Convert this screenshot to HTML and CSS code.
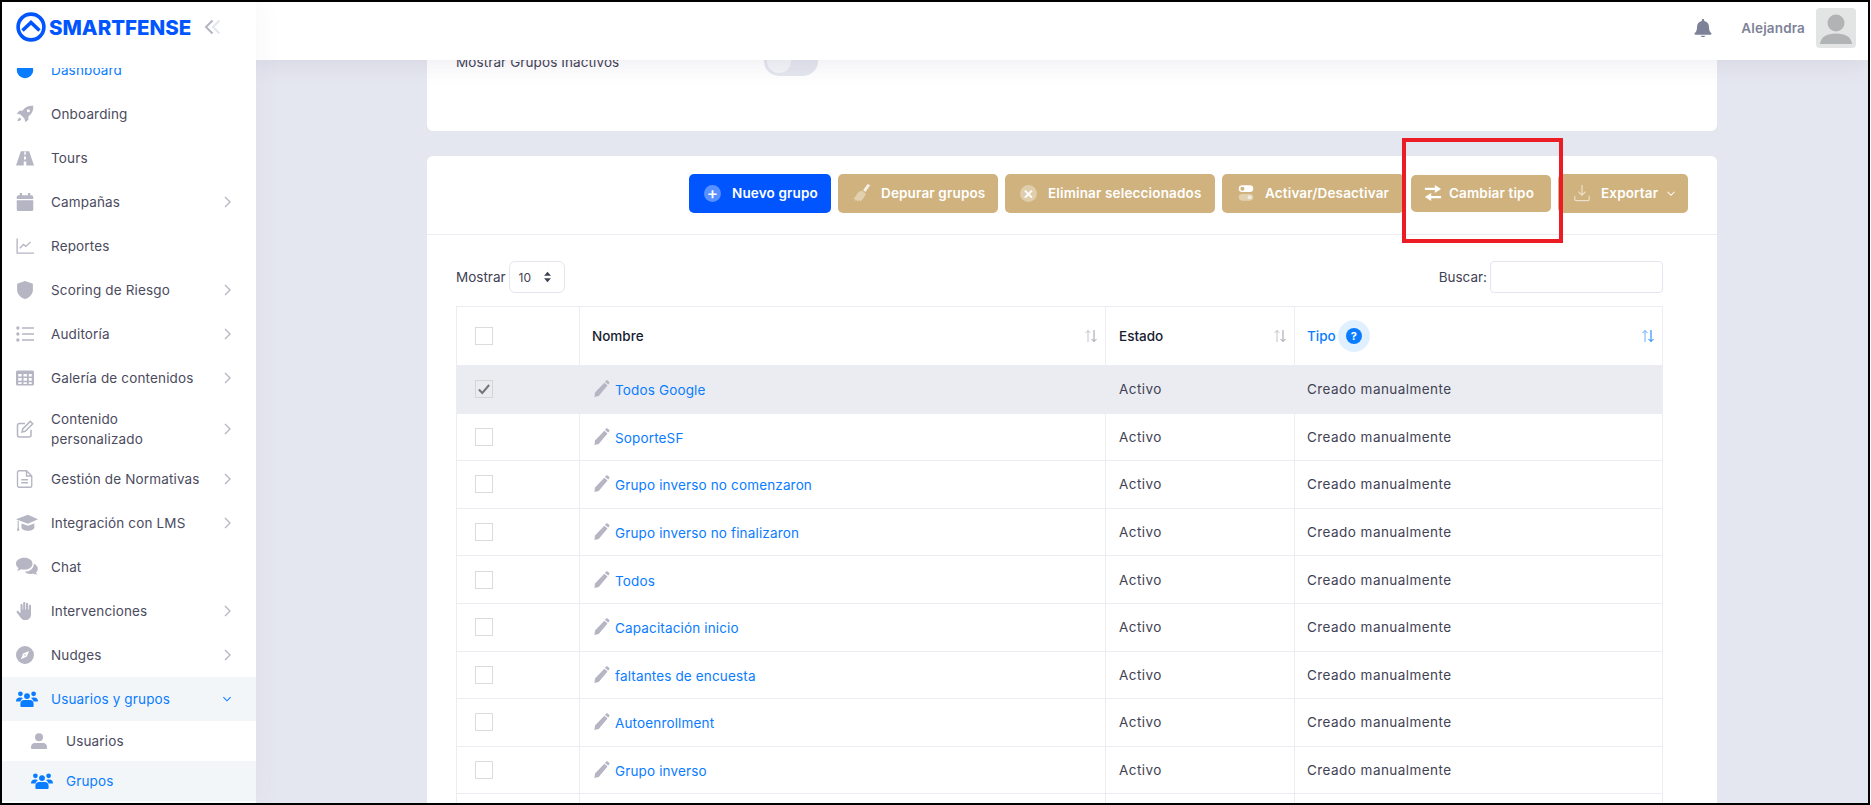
FILE: index.html
```html
<!DOCTYPE html>
<html lang="es">
<head>
  <meta charset="UTF-8" />
  <meta name="viewport" content="width=device-width, initial-scale=1.0"/>
  <title>Grupos</title>
  <link rel="stylesheet" href="styles.css">
</head>
<body>

  <!-- Icons -->
  <svg class="icon-defs" xmlns="http://www.w3.org/2000/svg">
    <symbol id="i-gauge" viewBox="0 0 24 24"><circle cx="12" cy="12" r="11"/></symbol>
    <symbol id="i-rocket" viewBox="0 0 24 24"><path fill-rule="evenodd" d="M23 1c-6-.6-11 1.500-14.500 6.500H4.500L1 11.500l5 1.300 5.200 5.200L12.500 23l4-3.500v-4.200C21.500 11.800 23.500 7 23 1zM16.500 5.500a2 2 0 1 0 0 4 2 2 0 0 0 0-4z"/><path d="M5 16.500c-1.500.5-2.500 2-3 5 3-.5 4.500-1.500 5-3z"/></symbol>
    <symbol id="i-road" viewBox="0 0 24 24"><path fill-rule="evenodd" d="M6.500 3h11L24 22H0zM11 3.500v4h2v-4zM10.700 10v4h2.600v-4zM10.300 16.500V22h3.400v-5.500z"/></symbol>
    <symbol id="i-calendar" viewBox="0 0 24 24"><path d="M5 0h3v3h8V0h3v3h2a2 2 0 0 1 2 2v3H1V5a2 2 0 0 1 2-2h2zM1 9.500h22V22a2 2 0 0 1-2 2H3a2 2 0 0 1-2-2z"/></symbol>
    <symbol id="i-chart" viewBox="0 0 24 24"><path class="line" stroke-width="1.800" d="M1.500 2v19.500H24M5 15l5-5 3 2.500 6.500-6"/></symbol>
    <symbol id="i-shield" viewBox="0 0 24 24"><path d="M12 0l10.500 3.500v8c0 6-4.500 10.500-10.500 12.500C6 22 1.500 17.500 1.500 11.500v-8z"/></symbol>
    <symbol id="i-list" viewBox="0 0 24 24"><path class="line" stroke-width="2.200" d="M8 4h16M8 12h16M8 20h16"/><circle cx="2.500" cy="4" r="2.200"/><circle cx="2.500" cy="12" r="2.200"/><circle cx="2.500" cy="20" r="2.200"/></symbol>
    <symbol id="i-grid" viewBox="0 0 24 24"><path fill-rule="evenodd" d="M2 2h20a2 2 0 0 1 2 2v16a2 2 0 0 1-2 2H2a2 2 0 0 1-2-2V4a2 2 0 0 1 2-2zM3 6.500v3.500h4.500V6.500zM10 6.500v3.500h4.500V6.500zM17 6.500v3.500h4V6.500zM3 12v3.500h4.500V12zM10 12v3.500h4.500V12zM17 12v3.500h4V12zM3 17.500V20h4.500v-2.500zM10 17.500V20h4.500v-2.500zM17 17.500V20h4v-2.500z"/></symbol>
    <symbol id="i-edit" viewBox="0 0 24 24"><path class="line" stroke-width="2" d="M20 13v7a2.500 2.500 0 0 1-2.500 2.500h-13A2.500 2.500 0 0 1 2 20V7a2.500 2.500 0 0 1 2.500-2.500H12M19 1.800l3.300 3.300-10 10-4.300 1 1-4.300z"/></symbol>
    <symbol id="i-file" viewBox="0 0 24 24"><path class="line" stroke-width="1.800" d="M4 1h10l7 7v13a2 2 0 0 1-2 2H4a2 2 0 0 1-2-2V3a2 2 0 0 1 2-2zM14 1v7h7M7 13h9M7 17h9"/></symbol>
    <symbol id="i-cap" viewBox="0 0 24 24"><path d="M13 3L0 8l13 4.800L24 8zM6 12.500v4.500c0 2 3 3.500 7 3.500s7-1.500 7-3.500v-4.500l-7 2.600zM1.800 9.500h1.200v7l.7 4H1l.8-4z"/></symbol>
    <symbol id="i-chat" viewBox="0 0 24 24"><path d="M9 2c5 0 9 2.800 9 6.500S14 15 9 15c-1.200 0-2.300-.2-3.300-.5C4.500 15.500 3 16 1 16c1-1 1.500-2 1.700-3C1 11.800 0 10.200 0 8.500 0 4.800 4 2 9 2z"/><path d="M19.500 8.500c2.500 1 4.300 3 4.300 5.300 0 1.600-.8 3-2 4 .2 1 .8 2 1.700 2.700-2 0-3.500-.4-4.700-1.300-1 .3-2 .5-3 .5-2.600 0-4.800-1-6.300-2.500 5.500 0 10-3.500 10-8.700z"/></symbol>
    <symbol id="i-hand" viewBox="0 0 24 24"><path d="M11 0c.8 0 1.400.6 1.400 1.400V10h1V2.500c0-.8.700-1.400 1.400-1.400s1.400.6 1.400 1.400V10h1V5c0-.8.700-1.400 1.400-1.400S20 4.200 20 5v11.500c0 4.300-3.300 7.500-7.500 7.500-3 0-5-1.300-6.500-3.500L1 14c-.5-.7-.3-1.500.3-2s1.500-.3 2 .3L6 15V4c0-.8.600-1.400 1.400-1.400S8.800 3.200 8.800 4v6h.8V1.400C9.600.6 10.200 0 11 0z"/></symbol>
    <symbol id="i-compass" viewBox="0 0 24 24"><path fill-rule="evenodd" d="M12 0a12 12 0 1 1 0 24 12 12 0 0 1 0-24zM17.500 6.500L9.500 10l-3 7.500 8-3.500zM12 11a1 1 0 1 1 0 2 1 1 0 0 1 0-2z"/></symbol>
    <symbol id="i-users" viewBox="0 0 30 24"><circle cx="6" cy="5" r="3.200"/><circle cx="24" cy="5" r="3.200"/><circle cx="15" cy="8" r="4"/><path d="M0 15c0-3 2-5 5-5h2c1 0 2 .4 2.500 1-1.800 1-3 2.500-3.300 4.500H1c-.6 0-1-.2-1-.5zM30 15c0-3-2-5-5-5h-2c-1 0-2 .4-2.500 1 1.800 1 3 2.500 3.300 4.500H29c.6 0 1-.2 1-.5zM11 13.500h8c3 0 5 2.200 5 5v3c0 .8-.7 1.500-1.500 1.500h-15C6.700 23 6 22.300 6 21.500v-3c0-2.800 2-5 5-5z"/></symbol>
    <symbol id="i-user" viewBox="0 0 24 24"><circle cx="12" cy="6.500" r="6"/><path d="M6 15h12c3.500 0 6 2.500 6 6v1.500c0 .8-.7 1.500-1.500 1.500h-21C.7 24 0 23.300 0 22.500V21c0-3.500 2.500-6 6-6z"/></symbol>
    <symbol id="i-pencil" viewBox="0 0 24 24"><path d="M18.500.8c.5-.6 1.400-.7 2-.2l2.300 2c.6.500.7 1.400.2 2L21.500 6.500 17 2.700zM16 4l4.500 3.800L8 22.500 2 24l.8-6.300z"/></symbol>
    <symbol id="i-bell" viewBox="0 0 24 24"><path d="M12 0c1 0 1.600.7 1.600 1.600v1C17.500 3.400 20 6.500 20 10.500c0 5 1.400 6.600 3 8.300.8.900.2 2.200-1 2.200H2c-1.200 0-1.800-1.300-1-2.200 1.600-1.700 3-3.300 3-8.300 0-4 2.500-7.100 6.400-7.900v-1C10.400.7 11 0 12 0zM9 22.200h6c0 1-1.300 1.800-3 1.800s-3-.8-3-1.800z"/></symbol>
    <symbol id="i-avatar" viewBox="0 0 40 40"><circle cx="20" cy="15" r="8.500"/><path d="M4 36c1-7 6-10.500 16-10.500S35 29 36 36z"/></symbol>
    <symbol id="i-chev-right" viewBox="0 0 10 14"><path class="line" stroke-width="1.300" d="M3 2l5 5-5 5"/></symbol>
    <symbol id="i-chev-down" viewBox="0 0 14 10"><path class="line" stroke-width="1.500" d="M2 2.500l5 5 5-5"/></symbol>
    <symbol id="i-sort" viewBox="0 0 14 14"><path class="line sort-up" d="M4 13V1.500M1.500 4L4 1.500 6.500 4"/><path class="line" d="M10 1v11.500M7.500 10l2.500 2.500 2.500-2.500"/></symbol>
    <symbol id="i-broom" viewBox="0 0 24 24"><path d="M23 1.500L19.500 0l-6 8 3 2.500z" fill-opacity=".8"/><path fill-opacity=".4" d="M12 8.500l5 4c-.5 3.500-4 7.500-7.500 11L8 21l-2.500 2.500L4.500 21 2 22.500l1-3-3 .5c3-3 5-5 6-8 2-1.500 4-3 6-3z"/></symbol>
  </svg>

  <div class="frame">

    <!-- Sidebar -->
    <aside class="sidebar">
      <div class="brand">
        <svg class="logo" viewBox="0 0 30 30"><circle cx="15" cy="15" r="12.900"/><path d="M6.500 18.500L15 10.500l8.500 8"/></svg>
        <span class="brand-name">SMARTFENSE</span>
        <svg class="collapse" viewBox="0 0 18 16"><path class="dark" d="M8.500 1.500L2 8l6.500 6.500"/><path class="pale" d="M15.500 1.500L9 8l6.500 6.500"/></svg>
      </div>
      <nav class="menu">
        <a class="menu-item is-link"><svg class="menu-icon"><use href="#i-gauge"/></svg><span>Dashboard</span></a>
        <a class="menu-item"><svg class="menu-icon"><use href="#i-rocket"/></svg><span>Onboarding</span></a>
        <a class="menu-item"><svg class="menu-icon"><use href="#i-road"/></svg><span>Tours</span></a>
        <a class="menu-item"><svg class="menu-icon"><use href="#i-calendar"/></svg><span>Campañas</span><svg class="chev"><use href="#i-chev-right"/></svg></a>
        <a class="menu-item"><svg class="menu-icon"><use href="#i-chart"/></svg><span>Reportes</span></a>
        <a class="menu-item"><svg class="menu-icon"><use href="#i-shield"/></svg><span>Scoring de Riesgo</span><svg class="chev"><use href="#i-chev-right"/></svg></a>
        <a class="menu-item"><svg class="menu-icon"><use href="#i-list"/></svg><span>Auditoría</span><svg class="chev"><use href="#i-chev-right"/></svg></a>
        <a class="menu-item"><svg class="menu-icon"><use href="#i-grid"/></svg><span>Galería de contenidos</span><svg class="chev"><use href="#i-chev-right"/></svg></a>
        <a class="menu-item tall"><svg class="menu-icon"><use href="#i-edit"/></svg><span>Contenido<br>personalizado</span><svg class="chev"><use href="#i-chev-right"/></svg></a>
        <a class="menu-item"><svg class="menu-icon"><use href="#i-file"/></svg><span>Gestión de Normativas</span><svg class="chev"><use href="#i-chev-right"/></svg></a>
        <a class="menu-item"><svg class="menu-icon big"><use href="#i-cap"/></svg><span>Integración con LMS</span><svg class="chev"><use href="#i-chev-right"/></svg></a>
        <a class="menu-item"><svg class="menu-icon big"><use href="#i-chat"/></svg><span>Chat</span></a>
        <a class="menu-item"><svg class="menu-icon"><use href="#i-hand"/></svg><span>Intervenciones</span><svg class="chev"><use href="#i-chev-right"/></svg></a>
        <a class="menu-item"><svg class="menu-icon"><use href="#i-compass"/></svg><span>Nudges</span><svg class="chev"><use href="#i-chev-right"/></svg></a>
        <a class="menu-item is-link is-open"><svg class="menu-icon big"><use href="#i-users"/></svg><span>Usuarios y grupos</span><svg class="chev"><use href="#i-chev-down"/></svg></a>
        <a class="menu-item sub"><svg class="menu-icon small"><use href="#i-user"/></svg><span>Usuarios</span></a>
        <a class="menu-item sub is-link is-open"><svg class="menu-icon big"><use href="#i-users"/></svg><span>Grupos</span></a>
      </nav>
    </aside>

    <div class="main">

      <!-- Header -->
      <header class="topbar">
        <svg class="bell"><use href="#i-bell"/></svg>
        <span class="username">Alejandra</span>
        <div class="avatar"><svg><use href="#i-avatar"/></svg></div>
      </header>

      <main class="content">

        <section class="card filter-card">
          <div class="filter-row">
            <span class="filter-label">Mostrar Grupos Inactivos</span>
            <span class="toggle"></span>
          </div>
        </section>

        <section class="card">
          <div class="toolbar">
            <button class="btn btn-primary w-new"><span class="btn-round">+</span>Nuevo grupo</button>
            <button class="btn w-clean"><svg class="btn-icon"><use href="#i-broom"/></svg>Depurar grupos</button>
            <button class="btn w-delete"><span class="btn-round">×</span>Eliminar seleccionados</button>
            <button class="btn w-activate">
              <svg class="btn-icon" viewBox="0 0 20 20"><rect x="2" y="1.500" width="16" height="7.500" rx="3.700" fill="#fff"/><circle cx="6" cy="5.200" r="2.200" fill="#cfb27e"/><rect x="2" y="11" width="16" height="7.500" rx="3.700" fill="#fff" fill-opacity=".4"/><circle cx="14" cy="14.700" r="2.200" fill="#fff" fill-opacity=".6"/></svg>
              Activar/Desactivar
            </button>
            <button class="btn w-change">
              <svg class="btn-icon" viewBox="0 0 20 20"><path d="M1 4.200h11V1l7 4.500-7 4.500V6.800H1zM19 13.200H8V10l-7 4.500L8 19v-3.200h11z"/></svg>
              Cambiar tipo
            </button>
            <button class="btn w-export">
              <svg class="btn-icon faint" viewBox="0 0 20 20"><path d="M10 1v11M6 8.500l4 4 4-4M2 13v4a1.500 1.500 0 0 0 1.500 1.500h13A1.500 1.500 0 0 0 18 17v-4"/></svg>
              Exportar
              <svg class="btn-chev"><use href="#i-chev-down"/></svg>
            </button>
          </div>

          <div class="table-area">
            <div class="table-controls">
              <label class="length">Mostrar
                <span class="select">10
                  <svg viewBox="0 0 10 14"><path d="M5 1l4 4.500H1zM5 13L1 8.500h8z"/></svg>
                </span>
              </label>
              <label class="search">Buscar:
                <input type="text">
              </label>
            </div>

            <table class="groups">
              <colgroup>
                <col class="col-check"><col class="col-name"><col class="col-state"><col class="col-type">
              </colgroup>
              <thead>
                <tr>
                  <th><span class="check"></span></th>
                  <th><div class="th-inner">Nombre<svg class="sort"><use href="#i-sort"/></svg></div></th>
                  <th><div class="th-inner">Estado<svg class="sort"><use href="#i-sort"/></svg></div></th>
                  <th class="is-sorted"><div class="th-inner"><span class="th-type">Tipo <span class="help"><b>?</b></span></span><svg class="sort"><use href="#i-sort"/></svg></div></th>
                </tr>
              </thead>
              <tbody>
                <tr class="selected">
                  <td><span class="check"><svg viewBox="0 0 14 14"><path d="M2.500 7.500l3 3 6-7"/></svg></span></td>
                  <td><svg class="pencil"><use href="#i-pencil"/></svg><a>Todos Google</a></td>
                  <td>Activo</td><td>Creado manualmente</td>
                </tr>
                <tr>
                  <td><span class="check"></span></td>
                  <td><svg class="pencil"><use href="#i-pencil"/></svg><a>SoporteSF</a></td>
                  <td>Activo</td><td>Creado manualmente</td>
                </tr>
                <tr>
                  <td><span class="check"></span></td>
                  <td><svg class="pencil"><use href="#i-pencil"/></svg><a>Grupo inverso no comenzaron</a></td>
                  <td>Activo</td><td>Creado manualmente</td>
                </tr>
                <tr>
                  <td><span class="check"></span></td>
                  <td><svg class="pencil"><use href="#i-pencil"/></svg><a>Grupo inverso no finalizaron</a></td>
                  <td>Activo</td><td>Creado manualmente</td>
                </tr>
                <tr>
                  <td><span class="check"></span></td>
                  <td><svg class="pencil"><use href="#i-pencil"/></svg><a>Todos</a></td>
                  <td>Activo</td><td>Creado manualmente</td>
                </tr>
                <tr>
                  <td><span class="check"></span></td>
                  <td><svg class="pencil"><use href="#i-pencil"/></svg><a>Capacitación inicio</a></td>
                  <td>Activo</td><td>Creado manualmente</td>
                </tr>
                <tr>
                  <td><span class="check"></span></td>
                  <td><svg class="pencil"><use href="#i-pencil"/></svg><a>faltantes de encuesta</a></td>
                  <td>Activo</td><td>Creado manualmente</td>
                </tr>
                <tr>
                  <td><span class="check"></span></td>
                  <td><svg class="pencil"><use href="#i-pencil"/></svg><a>Autoenrollment</a></td>
                  <td>Activo</td><td>Creado manualmente</td>
                </tr>
                <tr>
                  <td><span class="check"></span></td>
                  <td><svg class="pencil"><use href="#i-pencil"/></svg><a>Grupo inverso</a></td>
                  <td>Activo</td><td>Creado manualmente</td>
                </tr>
                <tr>
                  <td></td><td></td><td></td><td></td>
                </tr>
              </tbody>
            </table>
          </div>
        </section>
      </main>
    </div>

    <!-- Red highlight painted on the screenshot -->
    <div class="highlight"></div>
  </div>

</body>
</html>
```

FILE: styles.css
```css
* { box-sizing: border-box; margin: 0; padding: 0; }

html, body { height: 100%; overflow: hidden; }

body {
  font-family: "Inter", "Noto Sans", sans-serif;
  font-size: 13.5px;
  color: #3f4254;
  background: #fff;
}

.icon-defs { display: none; }
.line { fill: none; stroke: currentColor; }

.frame {
  position: relative;
  display: flex;
  width: 1870px;
  height: 805px;
  border: 2px solid #000;
  overflow: hidden;
}

/* Sidebar */
.sidebar {
  position: relative;
  z-index: 3;
  flex: 0 0 254px;
  display: flex;
  flex-direction: column;
  background: #fff;
  box-shadow: 0 0 28px rgba(82, 63, 105, 0.05);
}

.brand {
  flex: 0 0 66px;
  display: flex;
  align-items: center;
  padding: 0 0 16px 14px;
  background: #fff;
  position: relative;
  z-index: 1;
}

.logo { width: 30px; height: 30px; fill: none; stroke: #0055ff; stroke-width: 3.6; }

.brand-name {
  margin-left: 3px;
  font-size: 20.5px;
  font-weight: 800;
  color: #0055ff;
}

.collapse { width: 18px; height: 16px; margin-left: 13px; fill: none; stroke-width: 2; }
.collapse .dark { stroke: #b5b5c3; }
.collapse .pale { stroke: #e4e6ef; }

.menu { flex: 1; margin-top: -20px; color: #4b4b5e; }

.menu-item {
  display: flex;
  align-items: center;
  height: 44px;
  padding: 0 24px 0 14px;
  font-size: 13.5px;
  line-height: 20px;
  letter-spacing: 0.15px;
}

.menu-item.tall { height: 57px; }

.menu-item span { flex: 1; }

.menu-icon {
  flex: 0 0 18px;
  width: 18px;
  height: 18px;
  margin-right: 17px;
  fill: #b5b5c3;
  color: #b5b5c3;
}

.menu-icon.big { flex-basis: 22px; width: 22px; height: 22px; margin-right: 13px; }
.menu-icon.small { flex-basis: 16px; width: 16px; height: 18px; margin: 0 19px 0 0; }

.chev { width: 10px; height: 14px; color: #b5b5c3; }

.menu-item.sub { height: 40px; padding-left: 29px; }

.menu-item.is-link { color: #0a7cff; }
.menu-item.is-link .menu-icon { fill: #0a7cff; color: #0a7cff; }
.menu-item.is-link .chev { color: #0a7cff; }
.menu-item.is-open { background: #f3f6f9; }

/* Main */
.main {
  flex: 1;
  min-width: 0;
  display: flex;
  flex-direction: column;
  background: #e5e7f0;
}

.topbar {
  position: relative;
  z-index: 2;
  flex: 0 0 58px;
  display: flex;
  align-items: center;
  justify-content: flex-end;
  padding: 0 12px 6px 0;
  background: #fff;
  box-shadow: 0 4px 24px rgba(82, 63, 105, 0.1);
}

.bell { width: 18px; height: 20px; fill: #7e8299; margin-right: 29px; }

.username { font-size: 13.5px; font-weight: 600; letter-spacing: 0.15px; color: #7e8299; margin-right: 11px; }

.avatar { width: 40px; height: 40px; border-radius: 4px; background: #e3e5e5; }
.avatar svg { display: block; width: 40px; height: 40px; fill: #b0b4b5; }

.content {
  flex: 1;
  min-height: 0;
  overflow: hidden;
  padding: 0 151px 0 171px;
}

.card {
  background: #fff;
  border-radius: 6px;
}

.filter-card {
  height: 100px;
  margin: -29px 0 25px;
  padding: 15px 29px 0;
}

.filter-row { display: flex; align-items: center; height: 30px; }

.filter-label { width: 308px; padding-top: 2px; letter-spacing: 0.1px; }

.toggle {
  position: relative;
  width: 54px;
  height: 30px;
  border-radius: 15px;
  background: #e4e6ef;
}

.toggle::after {
  content: "";
  position: absolute;
  top: 3px;
  left: 3px;
  width: 24px;
  height: 24px;
  border-radius: 50%;
  background: #f3f4f8;
}

/* Toolbar */
.toolbar {
  display: flex;
  align-items: center;
  justify-content: flex-end;
  gap: 7px;
  height: 79px;
  padding: 0 29px 4px 0;
  border-bottom: 1px solid #ebedf3;
}

.btn {
  display: flex;
  align-items: center;
  gap: 10px;
  height: 39px;
  padding-left: 15px;
  border: none;
  border-radius: 5px;
  background: #cfb27e;
  color: #fff;
  font-family: inherit;
  font-size: 13.5px;
  font-weight: 600;
  letter-spacing: 0.15px;
  white-space: nowrap;
}

.btn-primary { background: #0055ff; }

.w-new { width: 142px; }
.w-clean { width: 160px; }
.w-delete { width: 210px; }
.w-activate { width: 182px; }
.w-change { width: 140px; height: 37px; gap: 7px; padding-left: 13px; }
.w-export { width: 130px; }

.btn-round {
  flex: 0 0 17px;
  height: 17px;
  margin-right: 1px;
  border-radius: 50%;
  background: rgba(255, 255, 255, 0.35);
  font-size: 17px;
  font-weight: 500;
  line-height: 16px;
  text-align: center;
}

.btn-icon { flex: 0 0 18px; width: 18px; height: 18px; fill: #fff; }
.btn-icon.faint { fill: none; stroke: rgba(255, 255, 255, 0.6); stroke-width: 1.3; }

.btn-chev { width: 10px; height: 7px; margin-left: -2px; }

/* Table */
.table-area { padding: 26px 54px 0 29px; }

.table-controls {
  display: flex;
  justify-content: space-between;
  margin-bottom: 13px;
}

.length, .search { display: flex; align-items: center; gap: 3px; }

.select {
  display: flex;
  align-items: center;
  justify-content: space-between;
  width: 56px;
  height: 32px;
  padding: 0 12px 0 9px;
  border: 1px solid #e4e6ef;
  border-radius: 6px;
  font-size: 12px;
}

.select svg { width: 9px; height: 12px; fill: #3f4254; }

.search input {
  width: 173px;
  height: 32px;
  border: 1px solid #e4e6ef;
  border-radius: 4px;
  outline: none;
}

.groups {
  width: 1206px;
  table-layout: fixed;
  border-collapse: collapse;
  border-top: 1px solid #ebedf3;
  border-left: 1px solid #ebedf3;
}

.col-check { width: 123px; }
.col-name { width: 526px; }
.col-state { width: 189px; }
.col-type { width: 368px; }

.groups th, .groups td {
  border-right: 1px solid #ebedf3;
  border-bottom: 1px solid #ebedf3;
  padding: 0 12px;
  text-align: left;
  font-size: 13.5px;
}

.groups th { height: 59px; font-weight: 500; color: #181c32; }
.groups td { height: 47.6px; letter-spacing: 0.45px; }

.groups th:first-child, .groups td:first-child { padding-left: 18px; }
.groups th:nth-child(3), .groups td:nth-child(3) { padding-left: 13px; }

.groups .is-sorted { color: #0a7cff; }

.th-inner { display: flex; align-items: center; justify-content: space-between; margin-right: -5px; }
.th-type { display: flex; align-items: center; gap: 2px; }

.sort { width: 14px; height: 14px; color: #9c9cab; }
.sort-up { opacity: 0.6; }
.is-sorted .sort { color: #0a7cff; }

.help {
  display: inline-flex;
  align-items: center;
  justify-content: center;
  width: 32px;
  height: 32px;
  border-radius: 50%;
  background: #e1f0ff;
}

.help b {
  width: 16px;
  height: 16px;
  border-radius: 50%;
  background: #0a7cff;
  color: #fff;
  font-size: 11px;
  font-weight: 700;
  line-height: 16px;
  text-align: center;
}

.check {
  display: block;
  width: 18px;
  height: 18px;
  border: 1px solid #dcdcdc;
  background: #fff;
}

.selected td { background: #ebecf1; }
.selected .check { background: #ebecf1; border-color: #d5d5d5; }
.check svg { display: block; width: 16px; height: 16px; fill: none; stroke: #777; stroke-width: 1.8; }

.pencil { width: 17px; height: 17px; margin: 0 5px 0 1px; fill: #b5b5c3; vertical-align: -2px; }

.groups a { color: #0a7cff; letter-spacing: 0.15px; }

/* Red box from the annotated screenshot */
.highlight {
  position: absolute;
  z-index: 5;
  left: 1400px;
  top: 136px;
  width: 161px;
  height: 105px;
  border: 4px solid #ec1c24;
}
```
